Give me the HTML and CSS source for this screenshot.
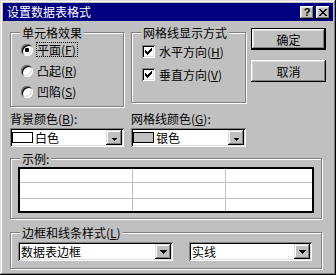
FILE: index.html
```html
<!DOCTYPE html>
<html lang="zh-CN">
<head>
<meta charset="utf-8">
<title>设置数据表格式</title>
<link rel="stylesheet" href="styles.css">
</head>
<body>
<div class="window">
  <div class="titlebar">
    <span class="title">设置数据表格式</span>
    <div class="tbtns">
      <span class="tbtn help">?</span>
      <span class="tbtn close"><svg width="8" height="7" viewBox="0 0 8 7" shape-rendering="crispEdges"><path d="M0 0h2v1h-2z M6 0h2v1h-2z M1 1h2v1h-2z M5 1h2v1h-2z M2 2h4v1h-4z M3 3h2v1h-2z M2 4h4v1h-4z M1 5h2v1h-2z M5 5h2v1h-2z M0 6h2v1h-2z M6 6h2v1h-2z" fill="#000"/></svg></span>
    </div>
  </div>
  <div class="content">
    <div class="row1">
      <fieldset class="group g1">
        <legend>单元格效果</legend>
        <div class="inner">
          <div class="opt"><span class="radio on"></span><span class="lbl focus">平面(<u>F</u>)</span></div>
          <div class="opt"><span class="radio"></span><span class="lbl">凸起(<u>R</u>)</span></div>
          <div class="opt"><span class="radio"></span><span class="lbl">凹陷(<u>S</u>)</span></div>
        </div>
      </fieldset>
      <fieldset class="group g2">
        <legend>网格线显示方式</legend>
        <div class="inner">
          <div class="opt chk"><span class="check"><svg width="7" height="7" viewBox="0 0 7 7" shape-rendering="crispEdges"><path d="M6 0h1v1h-1z M5 1h2v1h-2z M0 2h1v1h-1z M4 2h3v1h-3z M0 3h2v1h-2z M3 3h3v1h-3z M0 4h5v1h-5z M1 5h3v1h-3z M2 6h1v1h-1z" fill="#000"/></svg></span><span class="lbl">水平方向(<u>H</u>)</span></div>
          <div class="opt chk"><span class="check"><svg width="7" height="7" viewBox="0 0 7 7" shape-rendering="crispEdges"><path d="M6 0h1v1h-1z M5 1h2v1h-2z M0 2h1v1h-1z M4 2h3v1h-3z M0 3h2v1h-2z M3 3h3v1h-3z M0 4h5v1h-5z M1 5h3v1h-3z M2 6h1v1h-1z" fill="#000"/></svg></span><span class="lbl">垂直方向(<u>V</u>)</span></div>
        </div>
      </fieldset>
      <div class="buttons">
        <div class="btn default">确定</div>
        <div class="btn">取消</div>
      </div>
    </div>
    <div class="row2">
      <div class="field f1">
        <div class="label">背景颜色(<u>B</u>):</div>
        <div class="combo">
          <span class="swatch white"></span><span class="val">白色</span>
          <span class="drop small"><svg width="5" height="3" viewBox="0 0 5 3" shape-rendering="crispEdges"><path d="M0 0h5v1h-1v1h-1v1h-1v-1h-1v-1h-1z" fill="#000"/></svg></span>
        </div>
      </div>
      <div class="field f2">
        <div class="label">网格线颜色(<u>G</u>):</div>
        <div class="combo">
          <span class="swatch silver"></span><span class="val">银色</span>
          <span class="drop small"><svg width="5" height="3" viewBox="0 0 5 3" shape-rendering="crispEdges"><path d="M0 0h5v1h-1v1h-1v1h-1v-1h-1v-1h-1z" fill="#000"/></svg></span>
        </div>
      </div>
    </div>
    <fieldset class="group sample">
      <legend>示例:</legend>
      <div class="inner">
        <div class="grid">
          <span class="cell"></span><span class="cell"></span><span class="cell"></span>
          <span class="cell"></span><span class="cell"></span><span class="cell"></span>
          <span class="cell"></span><span class="cell"></span><span class="cell"></span>
        </div>
      </div>
    </fieldset>
    <fieldset class="group borders">
      <legend>边框和线条样式(<u>L</u>)</legend>
      <div class="inner row3">
        <div class="combo c1">
          <span class="val">数据表边框</span>
          <span class="drop"><svg width="7" height="4" viewBox="0 0 7 4" shape-rendering="crispEdges"><path d="M0 0h7v1h-1v1h-1v1h-1v1h-1v-1h-1v-1h-1v-1h-1z" fill="#000"/></svg></span>
        </div>
        <div class="combo c2">
          <span class="val">实线</span>
          <span class="drop"><svg width="7" height="4" viewBox="0 0 7 4" shape-rendering="crispEdges"><path d="M0 0h7v1h-1v1h-1v1h-1v1h-1v-1h-1v-1h-1v-1h-1z" fill="#000"/></svg></span>
        </div>
      </div>
    </fieldset>
  </div>
</div>
</body>
</html>
```

FILE: styles.css
```css
* { box-sizing: border-box; }
html, body { margin: 0; padding: 0; }
body {
  width: 336px;
  height: 275px;
  overflow: hidden;
  background: #c0c0c0;
  font-family: "Noto Sans CJK SC", "Noto Sans", sans-serif;
  font-size: 12px;
  color: #000;
}
u { text-decoration: underline; text-underline-offset: 1px; }

.window {
  width: 336px;
  height: 275px;
  padding: 3px;
  background: #c0c0c0;
  box-shadow: inset -1px -1px #000, inset 1px 1px #dfdfdf, inset -2px -2px #808080, inset 2px 2px #fff;
}

.titlebar {
  height: 18px;
  background: #000080;
  color: #fff;
  display: flex;
  align-items: center;
  justify-content: space-between;
  padding: 0 3px 0 4px;
}
.title { line-height: 18px; }
.tbtns { display: flex; gap: 2px; }
.tbtn {
  width: 14px;
  height: 13px;
  background: #c0c0c0;
  box-shadow: inset -1px -1px #000, inset 1px 1px #fff, inset -2px -2px #808080, inset 2px 2px #dfdfdf;
  display: flex;
  align-items: center;
  justify-content: center;
  color: #000;
}
.help {
  font-family: "Liberation Sans", sans-serif;
  font-weight: bold;
  font-size: 11px;
  line-height: 13px;
}

.content { padding: 5px 7px 0 7px; }

.group {
  margin: 0;
  padding: 0;
  min-width: 0;
  border: 1px solid #808080;
  box-shadow: 1px 1px 0 #fff, inset 1px 1px 0 #fff;
}
.group > legend {
  margin: 0 0 0 9px;
  padding: 0 2px;
  line-height: 13px;
  background: #c0c0c0;
}

.row1 { display: flex; align-items: flex-start; }
.g1 { width: 114px; height: 81px; margin-right: 7px; }
.g1 > .inner { padding-left: 10px; }
.g2 { width: 115px; height: 77px; margin-right: 5px; }
.g2 > .inner { padding: 1px 0 0 10px; }

.opt { display: flex; align-items: center; height: 21px; }
.opt.chk { height: 23px; }
.lbl {
  margin-left: 3px;
  padding: 0 1px 0 0;
  line-height: 13px;
  border: 1px dotted transparent;
}
.lbl.focus { border-color: #000; }

.radio {
  width: 12px;
  height: 12px;
  flex: none;
  border-radius: 50%;
  background: #fff;
  box-shadow: inset 1px 1px #808080, inset -1px -1px #fff, inset 2px 2px #000, inset -2px -2px #dfdfdf;
  display: flex;
  align-items: center;
  justify-content: center;
}
.radio.on::after {
  content: "";
  width: 4px;
  height: 4px;
  border-radius: 1px;
  background: #000;
}
.check {
  width: 13px;
  height: 13px;
  flex: none;
  background: #fff;
  box-shadow: inset 1px 1px #808080, inset -1px -1px #fff, inset 2px 2px #000, inset -2px -2px #dfdfdf;
  display: flex;
  align-items: center;
  justify-content: center;
}
.check svg { display: block; }

.buttons { display: flex; flex-direction: column; margin-top: 2px; }
.btn {
  width: 75px;
  height: 22px;
  display: flex;
  align-items: center;
  justify-content: center;
  background: #c0c0c0;
  box-shadow: inset -1px -1px #000, inset 1px 1px #fff, inset -2px -2px #808080, inset 2px 2px #dfdfdf;
}
.btn + .btn { margin-top: 10px; }
.btn.default { border: 1px solid #000; }

.row2 { display: flex; margin-top: 5px; }
.field.f1 { width: 114px; margin-right: 7px; }
.field.f2 { width: 115px; }
.label { line-height: 14px; }
.row2 .combo { margin-top: 2px; }

.combo {
  display: flex;
  align-items: center;
  height: 19px;
  padding: 2px;
  background: #fff;
  box-shadow: inset 1px 1px #808080, inset -1px -1px #fff, inset 2px 2px #000, inset -2px -2px #dfdfdf;
}
.val { line-height: 15px; padding-left: 1px; white-space: nowrap; }
.swatch {
  width: 21px;
  height: 11px;
  border: 1px solid #000;
  margin-right: 1px;
  flex: none;
}
.swatch.white { background: #fff; }
.swatch.silver { background: #c0c0c0; }
.drop {
  margin-left: auto;
  width: 16px;
  height: 15px;
  flex: none;
  background: #c0c0c0;
  box-shadow: inset -1px -1px #000, inset 1px 1px #dfdfdf, inset -2px -2px #808080, inset 2px 2px #fff;
  display: flex;
  align-items: center;
  justify-content: center;
}
.drop svg { display: block; }
.drop.small svg { margin-top: 3px; }

.sample { width: 312px; height: 67px; margin-top: 5px; }
.sample > .inner { padding: 2px 0 0 7px; }
.grid {
  width: 296px;
  height: 46px;
  border: 2px solid #000;
  background: #fff;
  display: grid;
  grid-template-columns: 113px 93px 86px;
  grid-template-rows: 14px 16px 12px;
}
.cell { border-right: 1px solid #c0c0c0; border-bottom: 1px solid #c0c0c0; }
.cell:nth-child(3n) { border-right: 0; }
.cell:nth-child(n+7) { border-bottom: 0; }

.borders { width: 312px; height: 43px; margin-top: 7px; }
.row3 { display: flex; padding: 3px 0 0 7px; }
.combo.c1 { width: 155px; }
.combo.c2 { width: 123px; margin-left: 16px; }
```
